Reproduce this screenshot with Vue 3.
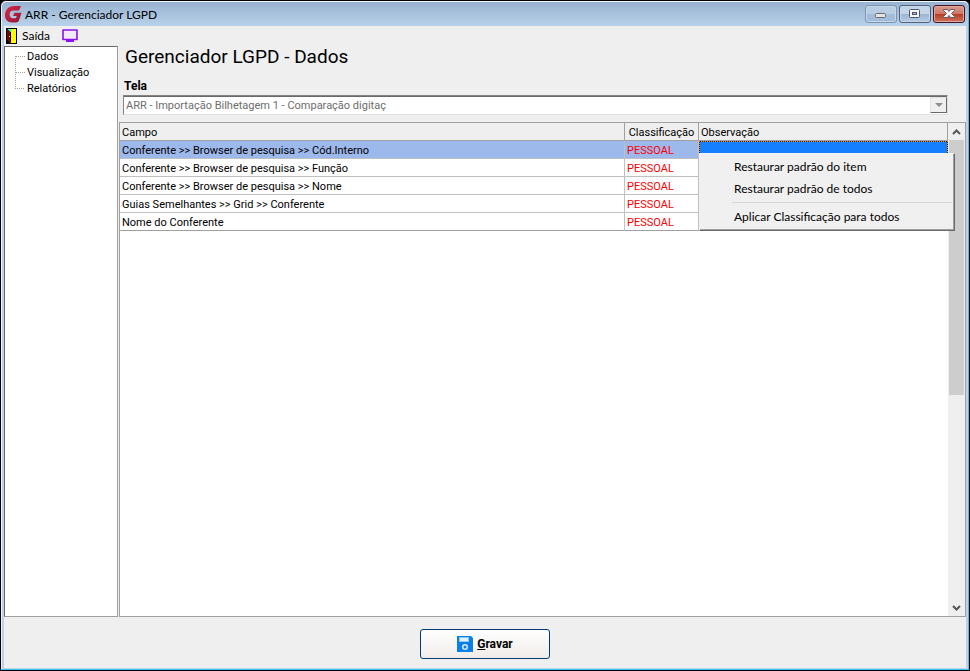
<script setup>
import { ref } from 'vue'

const sections = ['Dados', 'Visualização', 'Relatórios']
const screens = ['ARR - Importação Bilhetagem 1 - Comparação digitaç']
const screen = ref(screens[0])
const selected = ref(0)
const rows = [
  'Conferente >> Browser de pesquisa >> Cód.Interno',
  'Conferente >> Browser de pesquisa >> Função',
  'Conferente >> Browser de pesquisa >> Nome',
  'Guias Semelhantes >> Grid >> Conferente',
  'Nome do Conferente',
]
</script>

<template>
  <div class="window">
    <header class="titlebar">
      <svg class="logo" width="17" height="17" viewBox="0 0 17 17">
        <defs>
          <linearGradient id="logoRed" x1="0" y1="0" x2="1" y2="1">
            <stop offset="0" stop-color="#e0263f" />
            <stop offset="1" stop-color="#8c1838" />
          </linearGradient>
        </defs>
        <path fill="url(#logoRed)" d="M16 0 14 4.500H8.500C6 4.500 4.600 6 4.600 8.500S6 12.300 8 12.300H11L11.700 10H8L9.500 6.800H16.500L14 14.500Q13.200 16.500 11 16.500H7C2.500 16.500 0 13.500 0 9.500 0 4 3.500 0 9 0Z" />
      </svg>
      <span class="caption">ARR - Gerenciador LGPD</span>
      <div class="controls">
        <button class="ctl" type="button" aria-label="Minimizar">
          <svg width="30" height="16" viewBox="0 0 30 16"><rect x="9.500" y="7.500" width="10" height="4" rx="1" fill="#e4e4e4" stroke="#676b75" /></svg>
        </button>
        <button class="ctl max" type="button" aria-label="Maximizar">
          <svg width="30" height="16" viewBox="0 0 30 16"><rect x="9.500" y="3.500" width="10" height="8" rx="1" fill="#f5f5f5" stroke="#4d5468" /><rect x="12.500" y="6.500" width="4" height="2" fill="#a7bdd5" stroke="#4d5468" /></svg>
        </button>
        <button class="ctl close" type="button" aria-label="Fechar">
          <svg width="30" height="16" viewBox="0 0 30 16"><path d="M9.500 3.500h4l1.500 2 1.500-2h4v1l-3 3 3 3v1h-4l-1.500-2-1.500 2h-4v-1l3-3-3-3z" fill="#f4f4f4" stroke="#5f5d68" /></svg>
        </button>
      </div>
    </header>

    <nav class="toolbar">
      <button class="tool" type="button">
        <svg width="11" height="16" viewBox="0 0 11 16" shape-rendering="crispEdges">
          <rect width="11" height="16" fill="#000" />
          <rect x="5" y="1" width="5" height="14" fill="#ff0" />
          <path d="M1 1h1v1h1v1h1v1h1v11h-1v-1h-1v-1h-1v-1h-1z" fill="#800000" />
          <path d="M2 1h3v3h-1v-1h-1v-1h-1z" fill="#0ff" />
          <rect x="4" y="4" width="1" height="9" fill="#000" />
          <rect x="3" y="8" width="1" height="1" fill="#ff0" />
        </svg>
        <span>Saída</span>
      </button>
      <button class="tool" type="button" aria-label="Monitor">
        <svg width="16" height="14" viewBox="0 0 16 14"><path d="M1 1h14v9.500H1z" fill="#f1eaf8" stroke="#8a12f0" stroke-width="1.600" stroke-linejoin="round" /><path d="M4 11h8v2H4z" fill="#8a12f0" /></svg>
      </button>
    </nav>

    <main class="body">
      <aside class="tree">
        <ul>
          <li v-for="s in sections" :key="s"><a href="#">{{ s }}</a></li>
        </ul>
      </aside>

      <section class="content">
        <h1>Gerenciador LGPD - Dados</h1>
        <label for="tela">Tela</label>
        <div class="combo">
          <select id="tela" v-model="screen" disabled>
            <option v-for="s in screens" :key="s">{{ s }}</option>
          </select>
          <span class="drop"><svg width="8" height="4" viewBox="0 0 8 4"><path d="M0 0h8L4 4z" fill="#8e8e8e" /></svg></span>
        </div>

        <div class="panel">
          <div class="grid">
            <table>
              <colgroup><col /><col class="c-class" /><col class="c-obs" /></colgroup>
              <thead>
                <tr><th>Campo</th><th class="mid">Classificação</th><th>Observação</th></tr>
              </thead>
              <tbody>
                <tr v-for="(r, i) in rows" :key="r" :class="{ active: i === selected }" @click="selected = i">
                  <td>{{ r }}</td>
                  <td class="level">PESSOAL</td>
                  <td class="obs"></td>
                </tr>
              </tbody>
            </table>
          </div>
          <div class="scroll">
            <button type="button" aria-label="Rolar para cima"><svg width="9" height="6" viewBox="0 0 9 6"><path d="M1 5 4.500 1.500 8 5" fill="none" stroke="#555" stroke-width="2" /></svg></button>
            <div class="track"><div class="thumb"></div></div>
            <button type="button" aria-label="Rolar para baixo"><svg width="9" height="6" viewBox="0 0 9 6"><path d="M1 1 4.500 4.500 8 1" fill="none" stroke="#555" stroke-width="2" /></svg></button>
          </div>
          <div class="menu" role="menu">
            <button type="button" role="menuitem">Restaurar padrão do item</button>
            <button type="button" role="menuitem">Restaurar padrão de todos</button>
            <hr />
            <button type="button" role="menuitem">Aplicar Classificação para todos</button>
          </div>
        </div>
      </section>
    </main>

    <footer class="footer">
      <button class="save" type="button">
        <svg width="16" height="16" viewBox="0 0 16 16"><path d="M0 0h14l2 2v14H0z" fill="#0c7fe6" /><rect x="2.500" y="1.500" width="9" height="4" fill="#dff1ff" stroke="#8cc8f8" /><circle cx="8" cy="11" r="2.300" fill="#0c7fe6" stroke="#d5ecff" stroke-width="1.500" /></svg>
        <span><u>G</u>ravar</span>
      </button>
    </footer>
  </div>
</template>

<style>
body {
  margin: 0;
  background: #000;
}
</style>

<style scoped>
* {
  box-sizing: border-box;
}
button {
  font: inherit;
  color: inherit;
  border: 0;
  background: none;
  padding: 0;
  margin: 0;
}
svg {
  display: block;
}
.window {
  display: flex;
  flex-direction: column;
  min-height: 100vh;
  border: 1px solid #000;
  border-radius: 6px 6px 0 0;
  background: #efefef;
  box-shadow: inset -1px -1px #35c5ee, inset 1px 1px #eaf4ff, inset -3px -2px #bdd1ea, inset 3px 0 #bdd1ea;
  font: 11px/16px Roboto, "Liberation Sans", sans-serif;
  color: #000;
}
.titlebar {
  display: flex;
  align-items: center;
  gap: 3px;
  height: 25px;
  margin: 0 1px;
  padding: 0 3px;
  border-top: 1px solid #f4f8fd;
  border-radius: 5px 5px 0 0;
  background: linear-gradient(#97b3d1, #b9d1ea);
}
.caption {
  flex: 1;
  padding-top: 1px;
  font: 12px/16px Lato, "Segoe UI", sans-serif;
}
.controls {
  display: flex;
  align-items: center;
  gap: 2px;
}
.ctl {
  width: 32px;
  height: 18px;
  border: 1px solid #7d93b0;
  border-radius: 3px;
  background: linear-gradient(#b8cce2 50%, #a3bcd7 50%);
  box-shadow: inset 0 0 0 1px #c6d7ea;
}
.max {
  border-color: #50617c;
  background: linear-gradient(#c3d4e7 50%, #9bb5d2 50%, #b5cce4);
}
.close {
  border-color: #431422;
  background: linear-gradient(#dc9c90, #cc7563 50%, #b83a22 50%, #d0735c);
  box-shadow: inset 0 0 0 1px #e0a99d;
}
.toolbar {
  display: flex;
  align-items: center;
  gap: 12px;
  height: 20px;
  padding: 0 5px;
  font: 12px/16px Lato, "Segoe UI", sans-serif;
}
.tool {
  display: flex;
  align-items: center;
  gap: 5px;
}
.body {
  display: flex;
  flex: 1;
  gap: 1px;
  padding: 0 3px;
}
.tree {
  width: 114px;
  padding: 1px 0 0 10px;
  border: 1px solid #a0a0a0;
  border-top-color: #696969;
  border-left-color: #696969;
  background: #fff;
}
.tree ul {
  margin: 0;
  padding: 0;
  list-style: none;
}
.tree li {
  position: relative;
  height: 16px;
  padding-left: 12px;
  line-height: 18px;
}
.tree li::before {
  content: "";
  position: absolute;
  left: 0;
  top: 8px;
  width: 9px;
  height: 16px;
  border-top: 1px dotted #a0a0a0;
  border-left: 1px dotted #a0a0a0;
}
.tree li:last-child::before {
  height: 0;
  border-left: 0;
}
.tree a {
  color: inherit;
  text-decoration: none;
}
.content {
  display: flex;
  flex: 1;
  flex-direction: column;
  min-width: 0;
}
h1 {
  margin: 0 0 9px;
  padding-left: 6px;
  font-size: 19px;
  font-weight: 400;
  line-height: 22px;
}
label {
  padding-left: 5px;
  font-size: 12px;
  font-weight: 700;
  line-height: 18px;
}
.combo {
  position: relative;
  display: flex;
  height: 20px;
  margin: 0 18px 7px 4px;
  border: 1px solid;
  border-color: #848484 #e0e0e0 #e0e0e0 #848484;
  background: #fff;
}
.combo select {
  flex: 1;
  appearance: none;
  padding: 1px 20px 0 2px;
  border: 0;
  border-top: 1px solid #696969;
  background: #fff;
  color: #6d6d6d;
  font: inherit;
  opacity: 1;
}
.drop {
  position: absolute;
  top: 1px;
  right: 0;
  bottom: 1px;
  display: grid;
  place-items: center;
  width: 17px;
  border: 1px solid;
  border-color: #e3e3e3 #696969 #696969 #e3e3e3;
  background: #efefef;
  pointer-events: none;
}
.panel {
  position: relative;
  display: flex;
  flex: 1;
  border: 1px solid #a0a0a0;
  background: #fff;
}
.grid {
  flex: 1;
  min-width: 0;
}
table {
  width: 100%;
  table-layout: fixed;
  border-collapse: separate;
  border-spacing: 0;
}
.c-class {
  width: 74px;
}
.c-obs {
  width: 249px;
}
th,
td {
  height: 18px;
  padding: 2px 2px 0;
  border-right: 1px solid #c0c0c0;
  border-bottom: 1px solid #c0c0c0;
  font-weight: 400;
  line-height: 15px;
  text-align: left;
  white-space: nowrap;
}
th {
  border-color: #a0a0a0;
  background: #efefef;
}
.mid {
  text-align: center;
}
.level {
  color: #f00;
}
.active td {
  background: #9db8eb;
}
.active .obs {
  border: 0;
  background:
    repeating-linear-gradient(90deg, #f09020 0 1px, #222 1px 2px) top / 100% 1px no-repeat,
    repeating-linear-gradient(#f09020 0 1px, #222 1px 2px) left / 1px 100% no-repeat,
    repeating-linear-gradient(#f09020 0 1px, #222 1px 2px) right / 1px 100% no-repeat,
    #147fff;
}
tbody tr:last-child td {
  border-bottom-color: #a0a0a0;
}
.scroll {
  display: flex;
  flex-direction: column;
  width: 17px;
  background: #efefef;
}
.scroll button {
  display: grid;
  place-items: center;
  height: 17px;
}
.track {
  flex: 1;
}
.thumb {
  width: 15px;
  height: 55.5%;
  margin-left: 1px;
  background: #cdcdcd;
}
.menu {
  position: absolute;
  top: 30px;
  right: 10px;
  display: flex;
  flex-direction: column;
  width: 256px;
  padding: 2px;
  border: 1px solid;
  border-color: #f4f4f4 #696969 #696969 #f4f4f4;
  background: #f0f0f0;
  box-shadow: inset -1px -1px #a0a0a0;
  font: 12px/22px Lato, "Segoe UI", sans-serif;
}
.menu button {
  height: 22px;
  padding-left: 32px;
  text-align: left;
  white-space: nowrap;
}
.menu hr {
  width: auto;
  height: 1px;
  margin: 2px 0 3px 30px;
  border: 0;
  background: #d7d7d7;
}
.footer {
  display: flex;
  justify-content: center;
  padding: 12px 0 11px;
}
.save {
  display: flex;
  align-items: center;
  justify-content: center;
  gap: 4px;
  width: 130px;
  height: 30px;
  border: 1px solid #003c74;
  border-radius: 3px;
  background: linear-gradient(#fff, #f0ece9);
  font-size: 12px;
  font-weight: 700;
}
</style>
